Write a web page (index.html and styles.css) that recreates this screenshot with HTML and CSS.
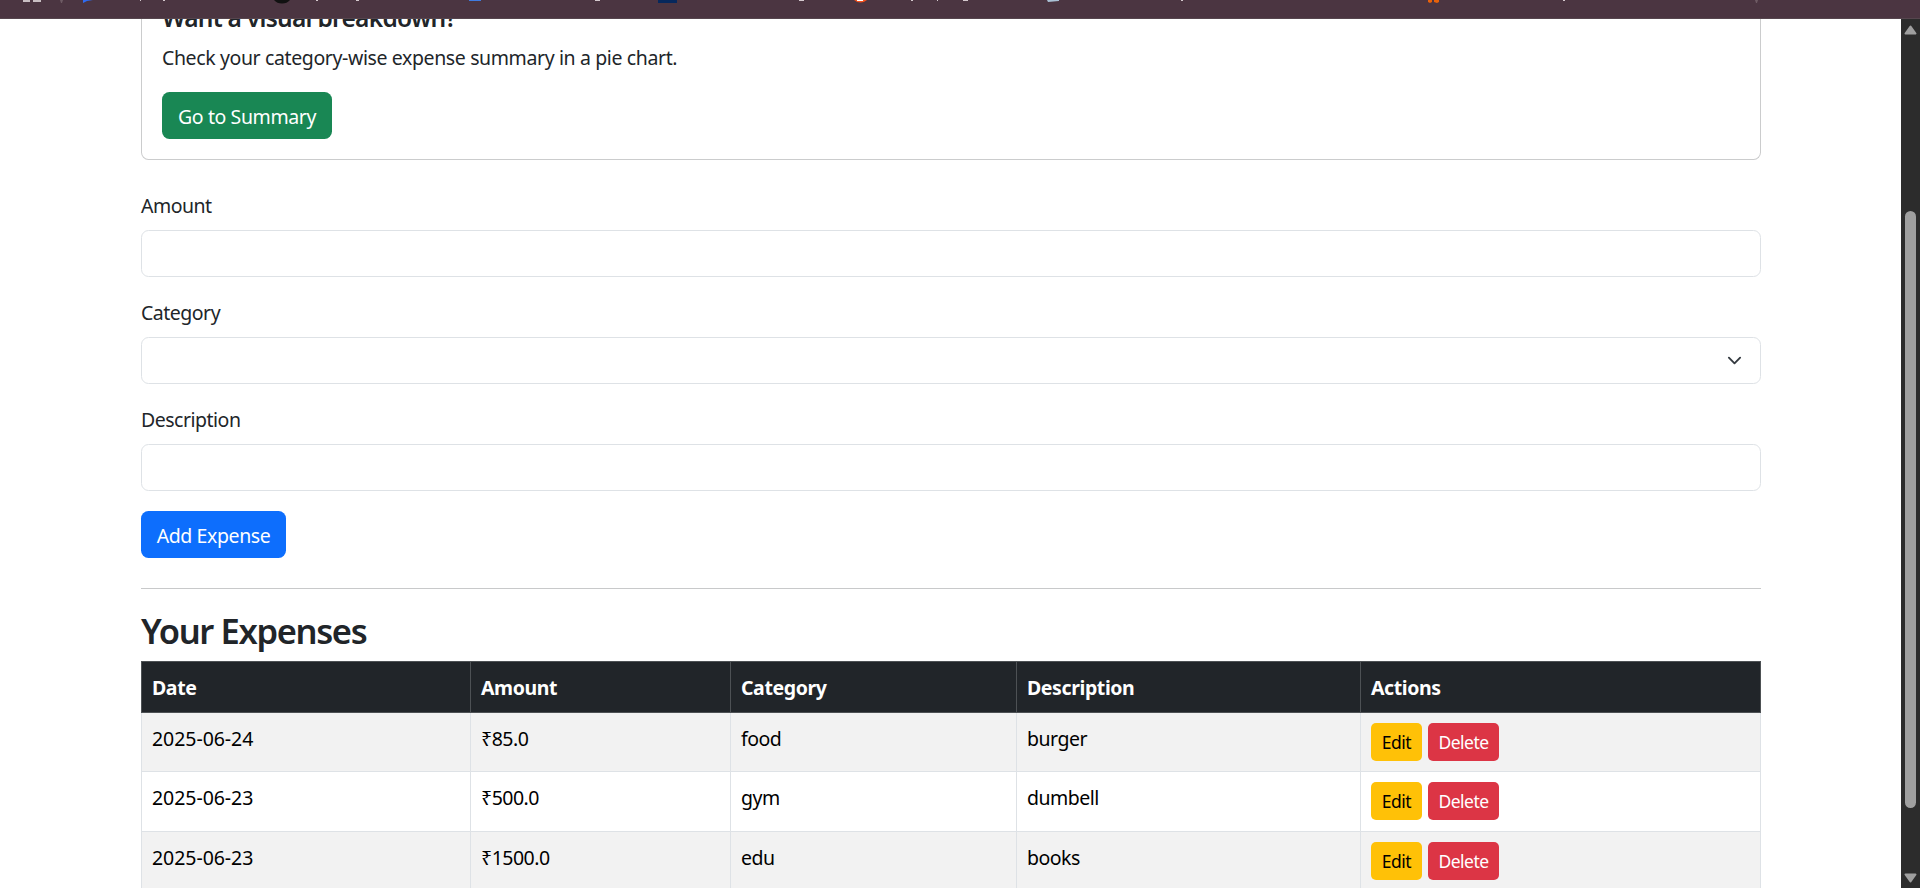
FILE: index.html
```html
<!DOCTYPE html>
<html lang="en">
<head>
<meta charset="utf-8">
<title>Expense Tracker</title>
<link rel="stylesheet" href="styles.css">
</head>
<body>
<div class="window">
  <div class="bookmarks">
    <svg width="1920" height="18" viewBox="0 0 1920 18">
      <path d="M23 0h7v2h-7zM33 0h8v2h-8z" fill="#c9bfc3"/>
      <path d="M60 0h3l-1 3h-1z" fill="#6e5b64"/>
      <path d="M83 0h10l-6 1-4 2z" fill="#2f6bf0"/>
      <path d="M274 0h16q-3 3.500-8 3.500t-8-3.500z" fill="#111"/>
      <path d="M469 0h12v1h-12z" fill="#3f7be0"/>
      <path d="M658 0h19v3h-19z" fill="#06285c"/>
      <path d="M854 0h13q-3 2.500-6.500 2.500t-6.500-2.500z" fill="#f0501e"/>
      <path d="M857 0h6v1h-6z" fill="#fff"/>
      <path d="M1047 0h12v1l-11 1z" fill="#a9c0d4"/>
      <path d="M1428 0h4v2l-2 1-2-1zM1434 0h5v2l-2 1-3-1z" fill="#e8610a"/>
      <path d="M1755 0h3l-1 3h-1z" fill="#6e5b64"/>
      <path d="M140 0h1v1h-1zM163 0h2v1h-2zM316 0h2v1h-2zM356 0h3v1h-3zM595 0h5v1h-5zM799 0h5v1h-5zM911 0h2v1h-2zM937 0h1v1h-1zM963 0h5v1h-5zM1181 0h2v1h-2zM1563 0h2v1h-2z" fill="#d5c9ce"/>
    </svg>
  </div>
  <div class="viewport">
    <main class="page">
      <section class="card">
        <h5 class="card-title">Want a visual breakdown?</h5>
        <p class="card-text">Check your category-wise expense summary in a pie chart.</p>
        <a class="btn btn-success">Go to Summary</a>
      </section>
      <form class="form">
        <label class="label">Amount</label>
        <div class="input"></div>
        <label class="label">Category</label>
        <div class="input select">
          <svg width="15" height="15" viewBox="0 0 16 16" fill="none" stroke="#343a40" stroke-width="2" stroke-linecap="round" stroke-linejoin="round"><path d="m2 5 6 6 6-6"/></svg>
        </div>
        <label class="label">Description</label>
        <div class="input"></div>
        <a class="btn btn-primary">Add Expense</a>
      </form>
      <hr class="rule">
      <h3 class="heading">Your Expenses</h3>
      <table class="table">
        <colgroup><col class="c-date"><col class="c-amount"><col class="c-cat"><col class="c-desc"><col class="c-act"></colgroup>
        <thead><tr><th>Date</th><th>Amount</th><th>Category</th><th>Description</th><th>Actions</th></tr></thead>
        <tbody>
          <tr class="odd first"><td class="date">2025-06-24</td><td>₹85.0</td><td>food</td><td>burger</td><td><div class="actions"><a class="btn-sm edit">Edit</a><a class="btn-sm delete">Delete</a></div></td></tr>
          <tr class="even"><td class="date">2025-06-23</td><td>₹500.0</td><td>gym</td><td>dumbell</td><td><div class="actions"><a class="btn-sm edit">Edit</a><a class="btn-sm delete">Delete</a></div></td></tr>
          <tr class="odd"><td class="date">2025-06-23</td><td>₹1500.0</td><td>edu</td><td>books</td><td><div class="actions"><a class="btn-sm edit">Edit</a><a class="btn-sm delete">Delete</a></div></td></tr>
        </tbody>
      </table>
    </main>
    <div class="scrollbar">
      <svg width="19" height="869" viewBox="0 0 19 869" fill="#9f9f9f">
        <path d="M9.500 7.500 14.500 14.500H4.500z" stroke="#9f9f9f" stroke-width="2" stroke-linejoin="round"/>
        <rect x="4" y="192" width="11" height="597" rx="5.500"/>
        <path d="M9.500 862.500 14.500 855.500H4.500z" stroke="#9f9f9f" stroke-width="2" stroke-linejoin="round"/>
      </svg>
    </div>
  </div>
</div>
</body>
</html>
```
FILE: styles.css
```css
* { box-sizing: border-box; }
body { margin: 0; background: #fff; color: #212529; font-family: "Segoe UI", "Noto Sans", sans-serif; font-size: 19.500px; line-height: 30px; letter-spacing: -0.500px; overflow: hidden; }
.window { display: flex; flex-direction: column; height: 888px; overflow: hidden; }
.bookmarks { flex: none; height: 19px; background: #4b3541; border-bottom: 1px solid #56464e; }
.bookmarks svg { display: block; }
.viewport { flex: 1; min-height: 0; display: flex; overflow: hidden; }
.page { flex: 1; min-width: 0; padding: 0 140px 0 141px; }
.scrollbar { flex: none; width: 19px; background: #2c2c2c; }
.scrollbar svg { display: block; }
.card { display: flow-root; height: 141px; border: 1px solid #cbcccd; border-top: 0; border-radius: 0 0 7.500px 7.500px; padding: 0 20px; }
.card-title { margin: -16px 0 10px; font-size: 24.500px; line-height: 30px; font-weight: 600; letter-spacing: -0.720px; }
.card-text { margin: 0 0 19px; letter-spacing: -0.380px; }
.btn { display: block; height: 47px; padding: 9.500px 0 0; border-radius: 7.500px; color: #fff; white-space: nowrap; text-align: center; letter-spacing: -0.400px; }
.btn-success { background: #198754; width: 170px; }
.btn-primary { background: #0d6efd; width: 145px; }
.form { padding-top: 31px; }
.label { display: block; margin: 0 0 9px; }
.input { height: 47px; margin-bottom: 21px; border: 1px solid #dee2e6; border-radius: 7.500px; }
.form .btn { margin-top: -1px; }
.select { display: flex; align-items: center; justify-content: flex-end; padding-right: 18px; }
.rule { margin: 30px 0 21px; border: 0; height: 1px; background: #c8c9ca; }
.heading { margin: 0 0 9px; font-size: 34.500px; line-height: 42px; font-weight: 600; letter-spacing: -1.350px; }
.table { width: 1619px; table-layout: fixed; border-collapse: collapse; color: #000; }
.c-date { width: 329px; }
.c-amount { width: 260px; }
.c-cat { width: 286px; }
.c-desc { width: 344px; }
.c-act { width: 400px; }
.table th { height: 51px; padding: 11px 10px 9px; border: 1px solid #4d5154; background: #212529; color: #fff; text-align: left; font-weight: 700; letter-spacing: -0.400px; }
.table td { height: 60px; padding: 11px 10px 9px; border: 1px solid #dee2e6; vertical-align: top; }
.table .first td { height: 59px; }
.table .date { letter-spacing: -0.050px; }
.odd td { background: #f2f2f2; }
.actions { display: flex; gap: 6px; margin-top: -1px; }
.btn-sm { height: 38px; padding: 5px 0; border-radius: 5px; font-size: 17.500px; line-height: 28px; text-align: center; }
.edit { width: 51px; background: #ffc107; color: #000; }
.delete { width: 71px; background: #dc3545; color: #fff; }
```
